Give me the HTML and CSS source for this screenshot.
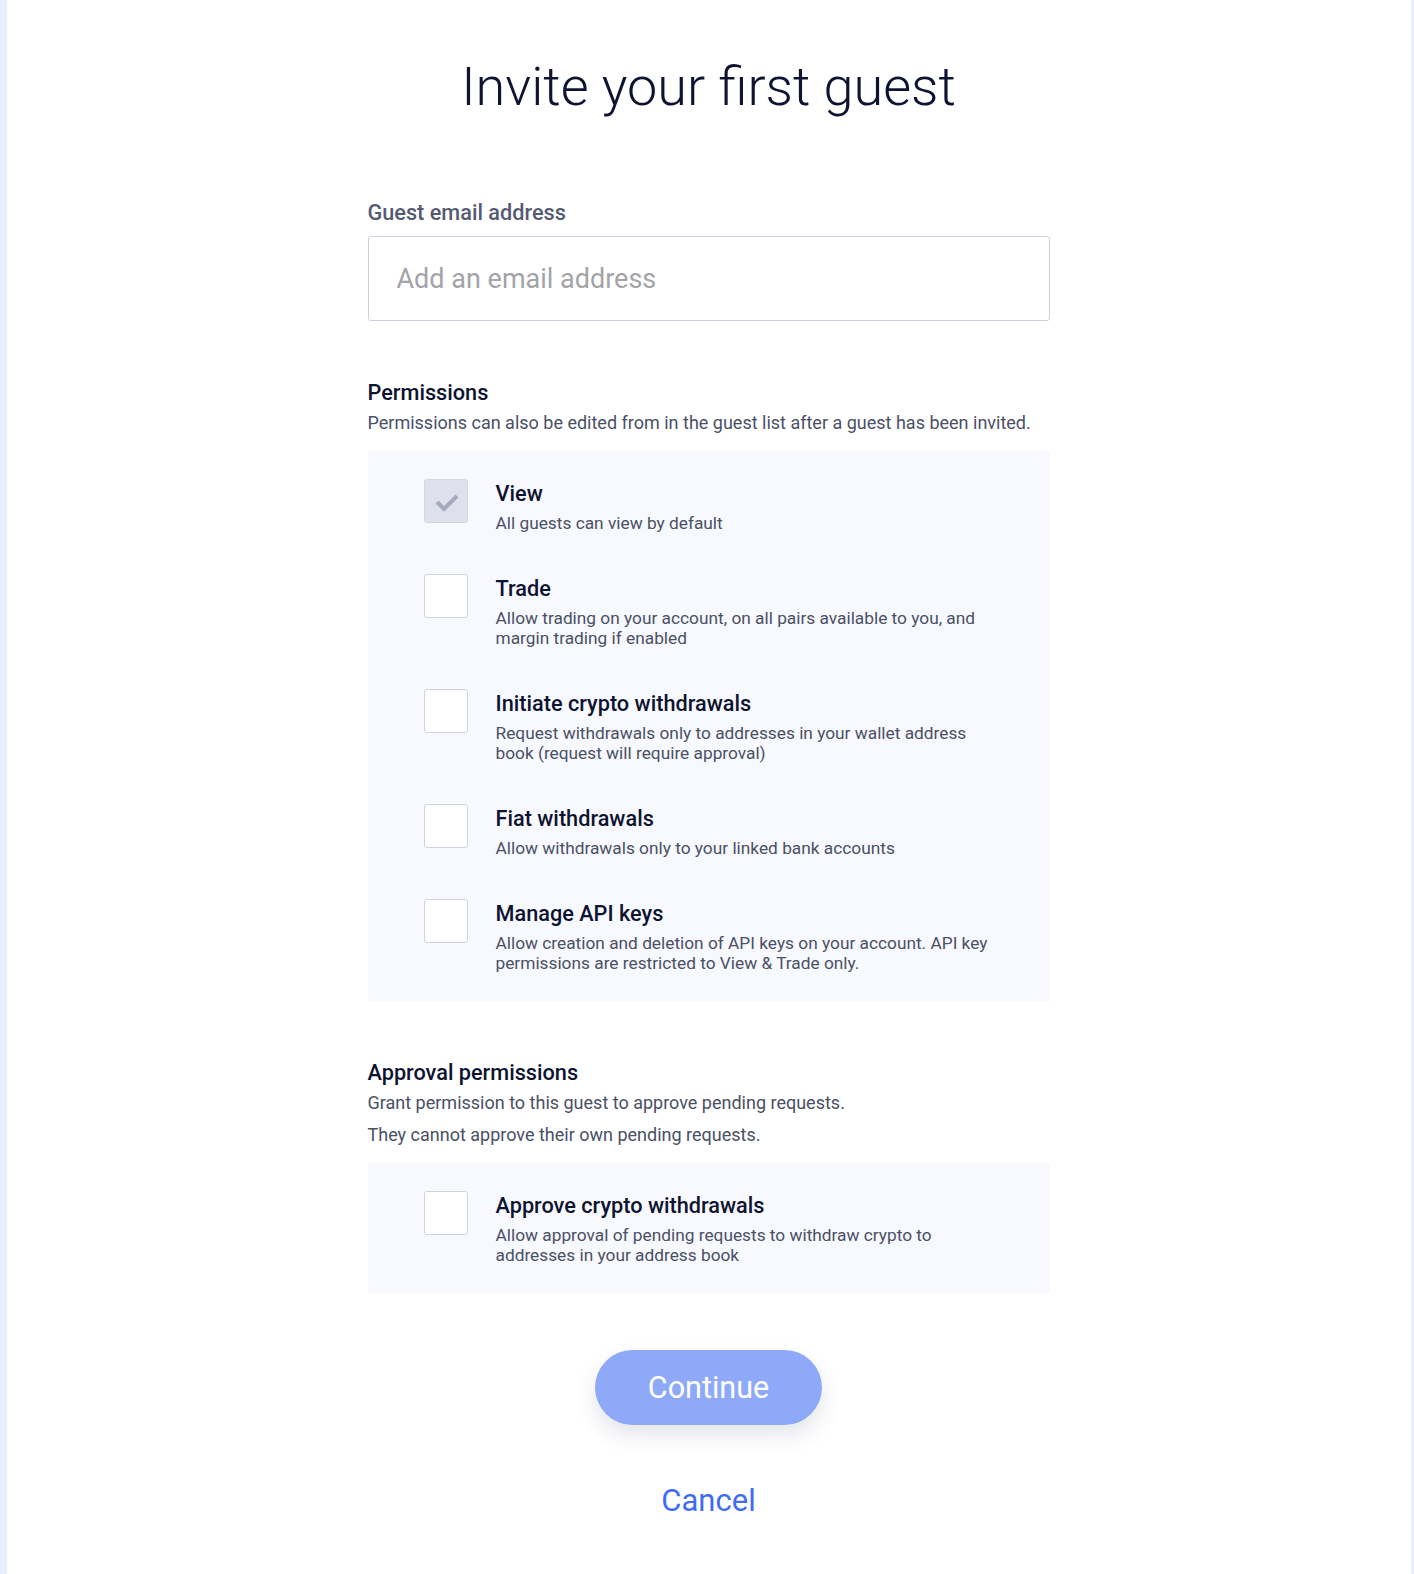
FILE: index.html
```html
<!DOCTYPE html>
<html lang="en">
<head>
<meta charset="utf-8">
<title>Invite your first guest</title>
<link rel="stylesheet" href="styles.css">
</head>
<body>
<div class="page">
  <main class="panel">
    <h1 class="title">Invite your first guest</h1>
    <form class="form">
      <label class="field-label" for="email">Guest email address</label>
      <input class="input" id="email" type="email" placeholder="Add an email address">

      <section class="section">
        <h2 class="section-title">Permissions</h2>
        <p class="section-sub">Permissions can also be edited from in the guest list after a guest has been invited.</p>
        <div class="box">
          <div class="item">
            <span class="check checked"><svg class="tick" viewBox="1 1 42 42" width="42" height="42"><path d="M13 23 L20 30 L33 17" fill="none" stroke="#a6aabc" stroke-width="4"/></svg></span>
            <div class="item-text">
              <div class="item-title">View</div>
              <div class="item-desc">All guests can view by default</div>
            </div>
          </div>
          <div class="item">
            <span class="check"></span>
            <div class="item-text">
              <div class="item-title">Trade</div>
              <div class="item-desc">Allow trading on your account, on all pairs available to you, and margin trading if enabled</div>
            </div>
          </div>
          <div class="item">
            <span class="check"></span>
            <div class="item-text">
              <div class="item-title">Initiate crypto withdrawals</div>
              <div class="item-desc">Request withdrawals only to addresses in your wallet address book (request will require approval)</div>
            </div>
          </div>
          <div class="item">
            <span class="check"></span>
            <div class="item-text">
              <div class="item-title">Fiat withdrawals</div>
              <div class="item-desc">Allow withdrawals only to your linked bank accounts</div>
            </div>
          </div>
          <div class="item">
            <span class="check"></span>
            <div class="item-text">
              <div class="item-title">Manage API keys</div>
              <div class="item-desc">Allow creation and deletion of API keys on your account. API key permissions are restricted to View &amp; Trade only.</div>
            </div>
          </div>
        </div>
      </section>

      <section class="section approval">
        <h2 class="section-title">Approval permissions</h2>
        <p class="section-sub">Grant permission to this guest to approve pending requests.</p>
        <p class="section-sub second">They cannot approve their own pending requests.</p>
        <div class="box">
          <div class="item">
            <span class="check"></span>
            <div class="item-text">
              <div class="item-title">Approve crypto withdrawals</div>
              <div class="item-desc">Allow approval of pending requests to withdraw crypto to addresses in your address book</div>
            </div>
          </div>
        </div>
      </section>

      <div class="actions">
        <button class="btn-continue" type="button">Continue</button>
        <a class="cancel" href="#">Cancel</a>
      </div>
    </form>
  </main>
</div>
</body>
</html>
```

FILE: styles.css
```css
* { box-sizing: border-box; }
html, body { margin: 0; padding: 0; }
body {
  background: #e9f0fc;
  font-family: Roboto, "Liberation Sans", sans-serif;
  color: #0d1330;
}
.page {
  padding: 0 3px 0 7px;
  min-height: 1574px;
}
.panel {
  background: #ffffff;
  min-height: 1574px;
  display: flex;
  flex-direction: column;
  align-items: center;
  padding: 52px 1px 0 0;
}
.title {
  margin: 0;
  font-weight: 300;
  font-size: 54px;
  line-height: 70px;
  color: #0d1330;
}
.form {
  width: 682px;
  margin-top: 79px;
  display: flex;
  flex-direction: column;
}
.field-label {
  font-size: 21.7px;
  font-weight: 500;
  color: #545a72;
  line-height: 24px;
}
.input {
  margin-top: 11px;
  height: 85px;
  width: 100%;
  border: 1px solid #cdd0dc;
  border-radius: 3px;
  padding: 0 28px;
  font-family: Roboto, "Liberation Sans", sans-serif;
  font-size: 27px;
  color: #0d1330;
  background: #fff;
  outline: none;
}
.input::placeholder { color: #a3a3a8; }
.section { margin-top: 59px; display: flex; flex-direction: column; }
.approval { margin-top: 59px; }
.section-title {
  margin: 0;
  font-size: 21.7px;
  font-weight: 500;
  line-height: 26px;
  color: #0d1330;
}
.section-sub {
  margin: 5px 0 0;
  font-size: 18px;
  line-height: 24px;
  color: #4a5066;
}
.section-sub.second { margin-top: 8px; }
.box {
  margin-top: 16px;
  background: #f8f9fe;
  padding: 28px 56px 28px 56px;
  display: flex;
  flex-direction: column;
  gap: 41px;
}
.item { display: flex; align-items: flex-start; }
.check {
  flex: none;
  width: 44px;
  height: 44px;
  border: 1px solid #cfd2df;
  border-radius: 3px;
  background: #fff;
  display: flex;
}
.check.checked { background: #dee0ec; border-color: #d3d6e3; }
.tick { display: block; }
.item-text { margin-left: 28px; max-width: 502px; }
.item-title {
  font-size: 21.7px;
  font-weight: 500;
  line-height: 29px;
  color: #0d1330;
}
.item-desc {
  margin-top: 5px;
  font-size: 17.3px;
  line-height: 20px;
  color: #4a5066;
}
.actions {
  margin-top: 57px;
  display: flex;
  flex-direction: column;
  align-items: center;
}
.btn-continue {
  width: 227px;
  height: 75px;
  border: none;
  border-radius: 38px;
  background: #8fa9f9;
  color: #fff;
  font-family: Roboto, "Liberation Sans", sans-serif;
  font-size: 30.5px;
  font-weight: 400;
  box-shadow: 0 10px 22px rgba(30, 40, 90, 0.12);
  cursor: pointer;
}
.cancel {
  margin-top: 58px;
  font-size: 31px;
  line-height: 36px;
  color: #3e6cf4;
  text-decoration: none;
}
```
